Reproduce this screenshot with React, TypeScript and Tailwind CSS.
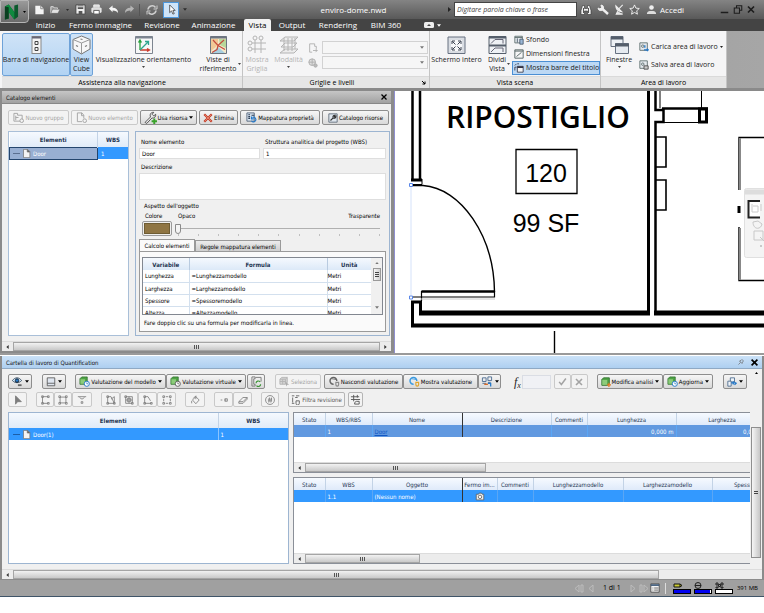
import type { ReactNode } from 'react';
import { clsx } from 'clsx';

const RIBBON_TABS_LEFT = [
  { label: 'Inizio', width: 'w-[33px]' },
  { label: 'Fermo immagine', width: 'w-[77px]' },
  { label: 'Revisione', width: 'w-[46px]' },
  { label: 'Animazione', width: 'w-[57px]' },
];

const RIBBON_TABS_RIGHT = [
  { label: 'Output', width: 'w-[42px]' },
  { label: 'Rendering', width: 'w-[50px]' },
  { label: 'BIM 360', width: 'w-[46px]' },
];

const FORMULAS = [
  { name: 'Lunghezza', formula: '=Lunghezzamodello', unit: 'Metri' },
  { name: 'Larghezza', formula: '=Larghezzamodello', unit: 'Metri' },
  { name: 'Spessore', formula: '=Spessoremodello', unit: 'Metri' },
  { name: 'Altezza', formula: '=Altezzamodello', unit: 'Metri' },
];

/* ---------- icons ---------- */

interface IconProps {
  className?: string;
  children: ReactNode;
  box?: string;
}

function Icon({ className = 'size-[11px]', box = '0 0 12 12', children }: IconProps) {
  return (
    <svg viewBox={box} className={clsx('shrink-0', className)} fill="none" stroke="currentColor" aria-hidden="true">
      {children}
    </svg>
  );
}

interface CaretProps {
  className?: string;
  size?: string;
}

function Caret({ className, size = 'w-[4px] h-[3px]' }: CaretProps) {
  return (
    <svg viewBox="0 0 5 3" className={clsx('shrink-0', size, className)} fill="currentColor" aria-hidden="true">
      <path d="M0 0h5L2.5 3z" />
    </svg>
  );
}

const PageIcon = ({ className }: { className?: string }) => (
  <Icon className={className}>
    <path d="M2 .5h5.500l3 3v8H2z" fill="#f4f4f4" stroke="#777" />
    <path d="M7 .5v3.500h3.500z" fill="#555" stroke="#777" />
  </Icon>
);

const NewGroupIcon = () => (
  <Icon>
    <path d="M1 1.500h4v2h5V10H1z" />
    <path d="M3 4v5M3 6h3" />
    <circle cx="9.500" cy="9.500" r="2" fill="#f3f3f3" />
  </Icon>
);

const NewItemIcon = () => (
  <Icon>
    <path d="M8.500 7V3.500L6.500 1h-5v9.500h5" />
    <path d="M6 1v3h2.500" />
    <circle cx="9.500" cy="9.500" r="2" fill="#f3f3f3" />
  </Icon>
);

const WrenchPlusIcon = () => (
  <Icon className="size-[13px]">
    <path d="M1 10.500l5-5C5 3 6.500 1 9 1.200L7.500 3l1.500 1.500 1.800-1.500c.4 2-1.300 4-3.500 3.500L2.500 11.500z" fill="#e9e9e9" stroke="#444" strokeWidth=".8" />
    <path d="M9.500 7v5M7 9.500h5" stroke="#3aa32b" strokeWidth="1.800" />
  </Icon>
);

const DeleteIcon = () => (
  <Icon className="size-[10px]">
    <path d="M1.500 1.500l9 9M10.500 1.500l-9 9" stroke="#c23b25" strokeWidth="2.600" />
    <path d="M2 2l8 8M10 2l-8 8" stroke="#ee8d77" strokeWidth="1" />
  </Icon>
);

const MapIcon = () => (
  <Icon>
    <path d="M1 1h8v9H1z" fill="#dbe6f2" stroke="#56677c" />
    <path d="M2.500 3h2M2.500 5h2M2.500 7h2M6 3.500h3" stroke="#2b3d54" strokeWidth="1.200" />
    <path d="M6 9.500a2.500 2.500 0 1 0 1-3.500M6 5v2.500h2.500" stroke="#2478c8" strokeWidth="1.200" />
  </Icon>
);

const CatalogIcon = () => (
  <Icon className="size-[10px]">
    <path d="M1 1h10v10H1z" fill="#dfe6ee" stroke="#5a6675" />
    <path d="M3 9l3.500-3.500M6 5.500c-.4-2 1-3 2.500-2.800L7.500 4l1 1L9.600 4c0 2-1.600 2.500-3.100 2" stroke="#333" strokeWidth="1.300" />
  </Icon>
);

const TakeoffIcon = ({ accent }: { accent: string }) => (
  <Icon>
    <path d="M1 3l2-2h6v6l-2 2H1z" fill="#4ea345" stroke="#2d6e2a" strokeWidth=".8" />
    <path d="M1.500 3.500h5v5h-5z" fill="#8ccb7a" stroke="none" />
    <circle cx="8.500" cy="8.500" r="2.800" fill="#fff" stroke={accent} />
    <path d="M8.500 7v1.500h1.500" stroke={accent} strokeWidth=".8" />
  </Icon>
);

const OrbitIcon = ({ ring, dot }: { ring: string; dot: string }) => (
  <Icon>
    <path d="M8.500 5.500A3.700 3.700 0 1 0 5 9" stroke={ring} strokeWidth="1.600" />
    <path d="M3 3l5 1" stroke={ring} strokeWidth=".8" />
    <path d="M7.500 7h3v2.500a1.500 1.500 0 0 1-3 0z" stroke={dot} strokeWidth="1.200" />
  </Icon>
);

const CubeIcon = () => (
  <Icon>
    <path d="M1 3.500l2-2h6v5.500l-2 2H1z" fill="#d4d4d4" stroke="#b3b3b3" />
    <path d="M1 3.500h6V9M7 3.500l2-2M4 3.500V9M1 6h6" stroke="#b3b3b3" />
    <path d="M7 6l4 3.500H9L8 11.500z" fill="#aaa" stroke="none" />
  </Icon>
);

const PagesRefreshIcon = () => (
  <Icon>
    <path d="M1 1h3.500v2H3v6h1.500v2H1zM5 1.500h6V6" stroke="#777" />
    <path d="M5.500 8a2.500 2.500 0 0 1 4.500-1.500M10.500 9a2.500 2.500 0 0 1-4.500 1.500" stroke="#3b9434" strokeWidth="1.300" />
  </Icon>
);

const GridLinkIcon = () => (
  <Icon className="w-[12px] h-[11px]">
    <path d="M1 2h4v4H1zM7 1h4v4H7zM1 8h4M7 7h3" stroke="#4d6c92" />
    <path d="M3 9h4" stroke="#d5621b" strokeWidth="1.500" />
    <path d="M7 8h3v3.500" stroke="#2478c8" strokeWidth="1.400" />
  </Icon>
);

const ExportIcon = () => (
  <Icon className="size-[10px]">
    <path d="M4 1h5v5H4z" fill="#eef3f8" stroke="#47678a" />
    <path d="M1 5h4v6H1z" fill="#eef3f8" stroke="#47678a" />
    <path d="M5 7h4M7.500 5v4M9 6.500l2 1-2 2" stroke="#2478c8" strokeWidth="1.500" />
  </Icon>
);

/* ---------- shared controls ---------- */

interface ToolButtonProps {
  children?: ReactNode;
  icon?: ReactNode;
  width: string;
  label?: string;
  caret?: boolean;
  disabled?: boolean;
}

function ToolButton({ children, icon, width, label, caret, disabled }: ToolButtonProps) {
  return (
    <button
      type="button"
      aria-label={label}
      disabled={disabled}
      className={clsx(
        'h-[15px] shrink-0 flex items-center justify-center gap-px border rounded-xs whitespace-nowrap',
        width,
        disabled ? 'border-[#c9c9c9] bg-[#f3f3f3] text-[#a3a3a3]' : 'border-[#8e8e8e] bg-linear-to-b from-[#f6f6f6] to-[#d9d9d9] text-black',
      )}
    >
      {icon}
      {children}
      {caret && <Caret className="ml-px" />}
    </button>
  );
}

interface HScrollProps {
  thumb: string;
  end?: boolean;
}

function HScroll({ thumb, end }: HScrollProps) {
  return (
    <div className="h-[10px] flex items-stretch bg-[#ececec] border-t border-[#dcdcdc]">
      <span className="w-[11px] flex items-center justify-center">
        <svg viewBox="0 0 3 5" className="w-[3px] h-[4px] fill-[#333]" aria-hidden="true"><path d="M3 0v5L0 2.500z" /></svg>
      </span>
      <span className={clsx('flex items-center justify-center gap-px border border-[#a5a5a5] bg-linear-to-b from-[#f2f2f2] to-[#c9c9c9]', thumb)}>
        <i className="w-px h-[4px] bg-[#555]" />
        <i className="w-px h-[4px] bg-[#555]" />
        <i className="w-px h-[4px] bg-[#555]" />
      </span>
      {end && (
        <span className="w-[11px] flex items-center justify-center">
          <svg viewBox="0 0 3 5" className="w-[3px] h-[4px] fill-[#333]" aria-hidden="true"><path d="M0 0v5l3-2.500z" /></svg>
        </span>
      )}
    </div>
  );
}

/* ---------- title bar ---------- */

function TitleBar() {
  return (
    <header className="h-[19px] flex items-center bg-linear-to-b from-[#848484] to-[#595959] text-white">
      <div className="w-[129px] ml-[5px] flex items-center">
        <button type="button" aria-label="Nuovo" className="w-[15px]">
          <Icon className="w-[11px] h-[10px]"><path d="M1 1h6.500L11 4.500V11H1z" fill="#f4f4f4" stroke="none" /><path d="M7.500 1v3.500H11" stroke="#777" /></Icon>
        </button>
        <button type="button" aria-label="Apri" className="w-[17px]">
          <Icon className="w-[12px] h-[10px]"><path d="M1 10V2h3l1 1.500h4V5" fill="#999" stroke="#e8e8e8" /><path d="M1 10l2-5h9l-2.500 5z" fill="#e2e2e2" stroke="#555" strokeWidth=".6" /></Icon>
        </button>
        <Caret className="text-[#2d2d2d] mr-[6px]" size="w-[3px] h-[2px]" />
        <button type="button" aria-label="Salva" className="w-[16px]">
          <Icon><path d="M1 1h10v10H1z" fill="#eee" stroke="#444" /><path d="M3 1.500h6v4H3zM4 7.500h4v3.500H4z" fill="#555" stroke="none" /><path d="M3 3h6" stroke="#eee" /></Icon>
        </button>
        <button type="button" aria-label="Stampa" className="w-[17px]">
          <Icon><path d="M3 4V1h6v3M1 4.500h10V9H1z" fill="#ddd" stroke="#f2f2f2" /><path d="M3 7h6v4H3z" fill="#fff" stroke="#555" /></Icon>
        </button>
        <button type="button" aria-label="Annulla" className="w-[16px]">
          <Icon><path d="M1 5l4-3.500V4c4 0 6 2 6 6-1-2-3-3-6-3v2z" fill="#f4f4f4" stroke="none" /></Icon>
        </button>
        <button type="button" aria-label="Ripristina" className="w-[15px] text-[#b5b5b5]">
          <Icon><path d="M11 5L7 1.500V4C3 4 1 6 1 10c1-2 3-3 6-3v2z" fill="currentColor" stroke="none" /></Icon>
        </button>
        <span className="w-px h-[12px] bg-[#555] mr-[6px]" />
        <button type="button" aria-label="Aggiorna" className="w-[16px] text-[#cfcfcf]">
          <Icon className="size-[12px]"><path d="M2 5.500A4.200 4.200 0 0 1 9.500 3.500M10 6.500A4.200 4.200 0 0 1 2.500 8.500" strokeWidth="1.600" /><path d="M11 1.500V5H7.500M1 10.500V7h3.500" strokeWidth="1" /></Icon>
        </button>
      </div>
      <button type="button" aria-label="Seleziona" className="w-[16px] h-[16px] flex items-center justify-center border border-[#4d97db] bg-[#cfe4f8]">
        <Icon><path d="M4 1v8.500l2-2L7.500 11 9 10.500 7.500 7H10z" fill="#fff" stroke="#333" strokeWidth=".8" /></Icon>
      </button>
      <Caret className="ml-[4px] text-[#2d2d2d]" />
      <h1 className="flex-1 text-center text-[8px] leading-[10px] pl-[82px] pr-[10px]">enviro-dome.nwd</h1>
      <svg viewBox="0 0 3 5" className="w-[3px] h-[5px] mr-[3px] fill-[#222]" aria-hidden="true"><path d="M0 0v5l3-2.500z" /></svg>
      <input
        type="search"
        aria-label="Cerca"
        placeholder="Digitare parola chiave o frase"
        className="w-[123px] h-[15px] px-[2px] bg-white border border-[#444] text-[7px] leading-[10px] italic text-black placeholder:text-[#444]"
      />
      <nav className="w-[187px] flex items-center">
        <button type="button" aria-label="Trova" className="ml-[3px] w-[17px]">
          <Icon className="size-[12px]"><path d="M2.500 1.500h2v3h3v-3h2l1.500 5v4H7.500V7h-3v3.500H1v-4z" fill="#efefef" stroke="#333" strokeWidth=".6" /><path d="M3.500 4v5M8.500 4v5" stroke="#555" /></Icon>
        </button>
        <button type="button" aria-label="Chiave" className="w-[17px]">
          <Icon className="size-[12px]"><path d="M5.500 5l5.500 5" stroke="#eee" strokeWidth="2.400" /><path d="M4 1a2.800 2.800 0 1 1-3 3l2 1 1.500-1.500z" fill="#eee" stroke="#eee" /></Icon>
        </button>
        <button type="button" aria-label="Comunicazioni" className="w-[15px]">
          <Icon><path d="M2 2c0 4 2 6 6.500 6.500zM5 5.500L9.500 1M4 8l-1.500 3h7" fill="#ddd" stroke="#eee" strokeWidth="1.200" /></Icon>
        </button>
        <button type="button" aria-label="Preferiti" className="w-[17px]">
          <Icon><path d="M6 1l1.500 3.500 3.700.4-2.800 2.500.8 3.700L6 9.200l-3.200 1.900.8-3.700L.8 4.900l3.700-.4z" fill="#666" stroke="#f5f5f5" /></Icon>
        </button>
        <button type="button" className="flex items-center gap-[3px] text-[8px] leading-[10px]">
          <Icon><circle cx="6" cy="3.800" r="2.500" fill="#eee" stroke="none" /><path d="M1 11c0-3 2-3.500 5-3.500s5 .5 5 3.500z" fill="#ddd" stroke="none" /></Icon>
          Accedi
        </button>
        <div className="ml-auto mr-[9px] flex items-center gap-[4px] text-[#1d1d1d]">
          <button type="button" aria-label="Riduci"><Icon className="w-[9px] h-[9px]"><path d="M1 10h10" strokeWidth="2" /></Icon></button>
          <button type="button" aria-label="Ripristina finestra"><Icon className="w-[10px] h-[9px]"><path d="M4 4V1h7v6H8M1 4h7v7H1z" strokeWidth="1.400" /></Icon></button>
          <button type="button" aria-label="Chiudi"><Icon className="w-[8px] h-[9px]"><path d="M1.500 1.500l9 9M10.500 1.500l-9 9" strokeWidth="2.600" /></Icon></button>
        </div>
      </nav>
    </header>
  );
}

function RibbonTabs() {
  return (
    <nav className="h-[12px] flex items-stretch bg-[#444] text-white text-[8px] leading-[12px] whitespace-nowrap">
      {RIBBON_TABS_LEFT.map(t => (
        <button key={t.label} type="button" className={clsx('flex justify-center', t.width)}>{t.label}</button>
      ))}
      <button type="button" className="w-[27px] ml-[2px] bg-[#f2f2f2] text-black flex justify-center rounded-t-xs">Vista</button>
      {RIBBON_TABS_RIGHT.map(t => (
        <button key={t.label} type="button" className={clsx('flex justify-center', t.width)}>{t.label}</button>
      ))}
      <button type="button" aria-label="Riduci barra multifunzione" className="ml-[15px] flex items-center gap-[3px]">
        <Icon className="w-[10px] h-[6px]" box="0 0 10 6"><rect width="10" height="6" rx="1.500" fill="#eee" stroke="none" /><path d="M3 4l2-2 2 2z" fill="#444" stroke="none" /></Icon>
        <Caret />
      </button>
    </nav>
  );
}

/* ---------- ribbon ---------- */

interface RibbonGroupProps {
  title: string;
  width: string;
  children: ReactNode;
  launcher?: boolean;
}

function RibbonGroup({ title, width, children, launcher }: RibbonGroupProps) {
  return (
    <section className={clsx('shrink-0 flex flex-col border-r border-[#c4c4c4]', width)}>
      <div className="flex-1 flex items-start pt-[2px]">{children}</div>
      <h2 className="h-[12px] flex items-center bg-[#e6e6e6] border-t border-[#dadada] leading-[10px]">
        <span className="flex-1 text-center">{title}</span>
        {launcher && (
          <Icon className="size-[5px] mr-[3px]" box="0 0 5 5"><path d="M1 1l3 3M4 1.500V4H1.500" /></Icon>
        )}
      </h2>
    </section>
  );
}

interface BigButtonProps {
  icon: ReactNode;
  lines: string[];
  width: string;
  active?: boolean;
  disabled?: boolean;
  caret?: boolean;
  sideCaret?: boolean;
}

function BigButton({ icon, lines, width, active, disabled, caret, sideCaret }: BigButtonProps) {
  return (
    <button
      type="button"
      disabled={disabled}
      className={clsx(
        'h-[43px] shrink-0 flex flex-col items-center pt-px border rounded-xs leading-[9px] whitespace-nowrap',
        width,
        active ? 'border-[#6ea2d8] bg-linear-to-b from-[#cfe3f7] to-[#b2d3f3]' : 'border-transparent',
        disabled ? 'text-[#b4b4b4]' : 'text-[#222]',
      )}
    >
      {icon}
      {lines.map(line => <span key={line}>{line}</span>)}
      {caret && <Caret size="w-[3px] h-[2px]" className="mt-[2px] text-[#444]" />}
      {sideCaret && <Caret size="w-[3px] h-[2px]" className="-mt-[10px] self-end text-[#444]" />}
    </button>
  );
}

function LevelSelect({ label }: { label: string }) {
  return (
    <div className="relative flex items-center">
      <select aria-label={label} disabled className="w-[106px] h-[13px] appearance-none bg-[#f6f6f6] border border-[#d2d2d2]" />
      <Caret className="absolute right-[4px] text-[#777]" />
    </div>
  );
}

function Ribbon() {
  return (
    <div className="flex items-stretch bg-linear-to-r from-[#8c8c8c] to-[#a6a6a6] border-b-[3px] border-[#8a8a8a] text-[7px]">
      <div className="h-[57px] flex bg-[#f5f5f6] pl-[2px]">
        <RibbonGroup title="Assistenza alla navigazione" width="w-[241px]">
          <BigButton
            width="w-[68px]"
            active
            lines={['Barra di navigazione']}
            icon={<Icon className="w-[11px] h-[20px]" box="0 0 11 20"><rect x="1" y="1.500" width="9" height="17" fill="#f4f4f4" stroke="#888" /><path d="M1 2.500h9" stroke="#667" strokeWidth="2" /><path d="M4 6.500h3v3H4zM4 12.500h3v3H4z" stroke="#444" /></Icon>}
          />
          <BigButton
            width="w-[23px]"
            active
            lines={['View', 'Cube']}
            icon={<Icon className="w-[19px] h-[20px]" box="0 0 19 20"><path d="M9.500 1L18 4.500V14l-8.500 5L1 14V4.500z" fill="#f7f7f7" stroke="#777" /><path d="M1 4.500L9.500 8 18 4.500M9.500 8v11" stroke="#999" /><path d="M4 10.500l2 1M13 11.500l2-1M8.500 4l2 .5" stroke="#777" strokeWidth="1.200" /></Icon>}
          />
          <BigButton
            width="w-[101px]"
            caret
            lines={['Visualizzazione orientamento']}
            icon={<Icon className="w-[20px] h-[20px]" box="0 0 20 20"><path d="M1.500 1.500h17v17h-17z" fill="#f7f7f7" stroke="#7d8590" /><path d="M1.500 2.500h17" stroke="#7d8590" strokeWidth="2" /><path d="M6 15V6M4.500 7.500L6 5l1.500 2.500" stroke="#28a03c" strokeWidth="1.300" /><path d="M6 15h9M13 13.500l2.500 1.500-2.500 1.500" stroke="#cc3b2d" strokeWidth="1.300" /><path d="M6 15l8-8M11 6.500h3.500V10" stroke="#2fa58e" strokeWidth="1.300" /></Icon>}
          />
          <BigButton
            width="w-[48px]"
            sideCaret
            lines={['Viste di', 'riferimento']}
            icon={<Icon className="w-[19px] h-[20px]" box="0 0 19 20"><path d="M1.500 1.500h16v17h-16z" fill="#f3e8c9" stroke="#6d7580" /><path d="M2 4h7v6l-7 6z" fill="#f2c896" stroke="none" /><path d="M10 4h7v9l-6-3z" fill="#b8d79a" stroke="none" /><path d="M3 18l6-6 7 6z" fill="#a7cfe0" stroke="none" /><path d="M1.500 2.500h16" stroke="#6d7580" strokeWidth="2" /><path d="M4 5l5 5.500L15 5M9 10.500l-1 4-5 3M9 10.500l7 4" stroke="#c44b3c" strokeWidth="1.200" /></Icon>}
          />
        </RibbonGroup>

        <RibbonGroup title="Griglie e livelli" width="w-[187px]" launcher>
          <BigButton
            width="w-[28px]"
            disabled
            lines={['Mostra', 'Griglia']}
            icon={<Icon className="w-[20px] h-[20px]" box="0 0 20 20"><path d="M8 5v13M14 5v13M5 8h14M5 14h14" /><circle cx="8" cy="3" r="2" /><circle cx="14" cy="3" r="2" /><circle cx="3" cy="8" r="2" /><circle cx="3" cy="14" r="2" /></Icon>}
          />
          <BigButton
            width="w-[35px]"
            disabled
            caret
            lines={['Modalità']}
            icon={<Icon className="w-[20px] h-[20px]" box="0 0 20 20"><path d="M6 2h13l-4 4H1zM6 14h13l-4 4H1z" fill="#ececec" /><path d="M5 3v13M9 3v13M13 3v13M16 3v11M6 8h12l-4 4H2z" /></Icon>}
          />
          <div className="ml-auto mr-px pt-[8px] flex flex-col gap-[2px] text-[#aaa]">
            <div className="flex items-center gap-[4px]">
              <Icon className="size-[10px]"><path d="M8 1H2v10h3M8 1v3h2v3" /><path d="M6 9h5M9 7l2 2-2 2" /></Icon>
              <LevelSelect label="Griglia attiva" />
            </div>
            <div className="flex items-center gap-[4px]">
              <Icon className="size-[10px]"><circle cx="5" cy="5" r="4" fill="#ddd" /><path d="M1 5h8M5 1v8" /><circle cx="9" cy="9" r="2" fill="#bbb" /></Icon>
              <LevelSelect label="Livello attivo" />
            </div>
          </div>
        </RibbonGroup>

        <RibbonGroup title="Vista scena" width="w-[171px]">
          <BigButton
            width="w-[53px]"
            lines={['Schermo intero']}
            icon={<Icon className="w-[19px] h-[20px]" box="0 0 19 20"><path d="M1 2h17v16.500H1z" fill="#d9dde3" stroke="#667080" /><path d="M4 5h11v11H4z" fill="#f7f8fa" stroke="none" /><path d="M5 9V6h3M11 6h3v3M14 12v3h-3M8 15H5v-3M5.500 6.500l3 3M13.500 6.500l-3 3M5.500 14.500l3-3M13.500 14.500l-3-3" stroke="#3a4250" /></Icon>}
          />
          <BigButton
            width="w-[28px]"
            sideCaret
            lines={['Dividi', 'Vista']}
            icon={<Icon className="w-[19px] h-[20px]" box="0 0 19 20"><path d="M1 1.500h17v17H1z" fill="#eef1f5" stroke="#555e6b" /><path d="M1 2.500h17M1 10.500h17" stroke="#555e6b" strokeWidth="2" /><path d="M3 8.500l4-4h8M3 17l4-4h8M15 4.500v4M15 13v4" stroke="#667" /></Icon>}
          />
          <div className="ml-auto flex flex-col leading-[10px] whitespace-nowrap text-[#222]">
            <button type="button" className="h-[14px] pl-[2px] flex items-center gap-[2px]">
              <Icon className="size-[10px]"><path d="M1 1.500h9v8H1zM1 3h9" fill="#e5e9ee" stroke="#566" /><path d="M4 4v5M7 5h4v6H7z" fill="#9bb8d8" stroke="#456" /></Icon>
              Sfondo
            </button>
            <button type="button" className="h-[14px] pl-[2px] flex items-center gap-[2px]">
              <Icon className="size-[10px]"><path d="M1 1h10v10H1zM1 2.500h10" fill="#f5f5f5" stroke="#455" /><path d="M3 9l6-5" stroke="#455" /></Icon>
              Dimensioni finestra
            </button>
            <button type="button" className="w-[88px] h-[14px] pl-px flex items-center gap-[2px] border border-[#4b8fd4] bg-[#bcd8f4]">
              <Icon className="size-[10px]"><path d="M4 4h7v7H4z" fill="#f5f5f5" stroke="#334" /><path d="M4 5h7" stroke="#334" strokeWidth="2" /><path d="M1 9V5h2M1 3l2-2M4 1h2" stroke="#334" /></Icon>
              Mostra barre del titolo
            </button>
          </div>
        </RibbonGroup>

        <RibbonGroup title="Area di lavoro" width="w-[126px]">
          <BigButton
            width="w-[36px]"
            caret
            lines={['Finestre']}
            icon={<Icon className="w-[20px] h-[20px]" box="0 0 20 20"><path d="M2 1.500h12v10H2z" fill="#eef1f5" stroke="#667080" /><path d="M2 3h12" stroke="#555e6b" strokeWidth="3" /><path d="M6.500 8.500h13v10h-13z" fill="#e6eaf0" stroke="#667080" /><path d="M6 10h14" stroke="#555e6b" strokeWidth="3" /></Icon>}
          />
          <div className="pt-[9px] ml-[2px] flex flex-col gap-[8px] leading-[10px] whitespace-nowrap text-[#222]">
            <button type="button" className="flex items-center gap-[2px]">
              <Icon className="size-[10px]"><path d="M1 1h9v9H1z" fill="#e5e9ee" stroke="#566" /><circle cx="4.500" cy="5" r="1.500" stroke="#566" /><path d="M7 4v3M6 9.500h5M9.500 8l1.500 1.500L9.500 11" stroke="#2478c8" strokeWidth="1.500" /></Icon>
              Carica area di lavoro
              <Caret size="w-[3px] h-[2px]" />
            </button>
            <button type="button" className="flex items-center gap-[2px]">
              <Icon className="size-[10px]"><path d="M1 1h9v9H1z" fill="#e5e9ee" stroke="#566" /><circle cx="4.500" cy="5" r="1.500" stroke="#566" /><path d="M6 7h5v4H6z" fill="#ccc" stroke="#444" /></Icon>
              Salva area di lavoro
            </button>
          </div>
        </RibbonGroup>
      </div>
    </div>
  );
}

/* ---------- catalog panel ---------- */

function CatalogTree() {
  return (
    <div className="w-[121px] shrink-0 border border-[#a9bfd8] bg-white">
      <table className="w-full table-fixed border-collapse">
        <colgroup><col className="w-[88px]" /><col /></colgroup>
        <thead>
          <tr className="h-[15px] bg-linear-to-b from-[#f5f9fe] to-[#e0ebf8] text-[#1f3552]">
            <th className="p-0 font-semibold border-r border-[#c3d3e6]">Elementi</th>
            <th className="p-0 font-semibold">WBS</th>
          </tr>
        </thead>
        <tbody>
          <tr className="h-[12px] text-white">
            <td className="p-0 bg-[#98afd2] border border-[#24456d]">
              <span className="flex items-center gap-[2px] pl-[3px]">
                <i className="w-[7px] h-px bg-[#5b6f8f]" />
                <PageIcon className="size-[9px]" />
                Door
              </span>
            </td>
            <td className="p-0 pl-[3px] bg-[#3399ff]">1</td>
          </tr>
        </tbody>
      </table>
    </div>
  );
}

function FormulaTable() {
  return (
    <div className="h-[58px] flex border border-[#828790] bg-white overflow-hidden">
      <div className="flex-1 overflow-hidden">
        <table className="w-full table-fixed border-collapse">
          <colgroup><col className="w-[46px]" /><col className="w-[138px]" /><col /></colgroup>
          <thead>
            <tr className="h-[12px] bg-linear-to-b from-[#f5f9fe] to-[#dce9f8] text-[#1f3552]">
              <th className="p-0 font-semibold border-r border-[#b9cbe0]">Variabile</th>
              <th className="p-0 font-semibold border-r border-[#b9cbe0]">Formula</th>
              <th className="p-0 font-semibold">Unità</th>
            </tr>
          </thead>
          <tbody>
            {FORMULAS.map(f => (
              <tr key={f.name} className="h-[12px] border-b border-[#d3e0ee]">
                <td className="p-0 pl-[2px] border-r border-[#d3e0ee]">{f.name}</td>
                <td className="p-0 pl-[2px] border-r border-[#d3e0ee]">{f.formula}</td>
                <td className="p-0">{f.unit}</td>
              </tr>
            ))}
          </tbody>
        </table>
      </div>
      <div className="w-[11px] flex flex-col items-center bg-[#f0f0f0]">
        <Caret size="w-[4px] h-[2px]" className="my-[4px] rotate-180 text-[#777]" />
        <span className="w-[8px] h-[13px] flex flex-col items-center justify-center gap-px border border-[#9a9a9a] bg-linear-to-r from-[#f5f5f5] to-[#d2d2d2]">
          <i className="w-[4px] h-px bg-[#444]" />
          <i className="w-[4px] h-px bg-[#444]" />
          <i className="w-[4px] h-px bg-[#444]" />
        </span>
        <Caret className="mt-auto mb-[5px] text-[#777]" />
      </div>
    </div>
  );
}

function ElementForm() {
  return (
    <form className="flex-1 min-w-0 border border-[#9db5d1] bg-[#f0f0f0] pt-[4px] px-[3px] pb-[3px]">
      <div className="flex gap-[3px]">
        <label className="w-[121px] leading-[12px]">
          <span className="block pl-[2px]">Nome elemento</span>
          <input type="text" defaultValue="Door" className="block w-full h-[11px] px-[2px] bg-white border border-[#dedede] leading-[9px]" />
        </label>
        <label className="flex-1 leading-[12px] whitespace-nowrap">
          <span className="block pl-[2px]">Struttura analitica del progetto (WBS)</span>
          <input type="text" defaultValue="1" className="block w-full h-[11px] px-[2px] bg-white border border-[#dedede] leading-[9px]" />
        </label>
      </div>
      <label className="block leading-[12px] pt-[2px]">
        <span className="block pl-[2px]">Descrizione</span>
        <textarea className="block w-full h-[27px] bg-white border border-[#dedede] resize-none" />
      </label>

      <fieldset className="mt-px pb-[3px]">
        <legend className="pl-[5px] leading-[9px]">Aspetto dell'oggetto</legend>
        <div className="pl-[6px] pr-[6px] flex leading-[11px]">
          <label htmlFor="colore" className="w-[33px]">Colore</label>
          <span className="flex-1">Opaco</span>
          <span>Trasparente</span>
        </div>
        <div className="pl-[3px] pr-[6px] flex items-start gap-[3px]">
          <button id="colore" type="button" className="w-[30px] h-[15px] p-px border border-[#9a9a9a] bg-[#eee] rounded-xs">
            <span className="block w-full h-full border border-[#6e5c33] bg-[#8f7543]" />
          </button>
          <div className="flex-1 grid pt-[2px]">
            <input
              type="range"
              aria-label="Trasparenza"
              defaultValue="0"
              className="col-start-1 row-start-1 w-full h-[11px] appearance-none bg-transparent [&::-webkit-slider-runnable-track]:h-px [&::-webkit-slider-runnable-track]:bg-[#b0b0b0] [&::-webkit-slider-thumb]:appearance-none [&::-webkit-slider-thumb]:-mt-[4px] [&::-webkit-slider-thumb]:w-[6px] [&::-webkit-slider-thumb]:h-[10px] [&::-webkit-slider-thumb]:bg-[#f4f4f4] [&::-webkit-slider-thumb]:border [&::-webkit-slider-thumb]:border-[#8a8a8a] [&::-webkit-slider-thumb]:rounded-b-full"
            />
            <div className="h-[2px] pl-[3px] flex justify-between">
              {Array.from({ length: 11 }, (_, i) => <i key={i} className="w-px h-[2px] bg-[#c0c0c0]" />)}
            </div>
          </div>
        </div>
      </fieldset>

      <div role="tablist" className="flex items-end leading-[9px] whitespace-nowrap">
        <button type="button" role="tab" aria-selected="true" className="w-[56px] h-[12px] bg-[#fafafa] border border-b-0 border-[#9a9a9a]">Calcolo elementi</button>
        <button type="button" role="tab" aria-selected="false" className="w-[86px] h-[11px] bg-linear-to-b from-[#ececec] to-[#cfcfcf] border border-b-0 border-[#9a9a9a]">Regole mappatura elementi</button>
      </div>
      <div className="border border-[#9a9a9a] bg-[#fafafa] pt-[5px] px-[2px]">
        <FormulaTable />
        <p className="pl-[2px] py-[2px] leading-[12px]">Fare doppio clic su una formula per modificarla in linea.</p>
      </div>
    </form>
  );
}

function CatalogPanel() {
  return (
    <section className="w-[394px] shrink-0 flex flex-col border-l-2 border-r-[3px] border-b-2 border-[#8b8b8b] bg-[#f0f0f0]">
      <header className="h-[13px] flex items-center justify-between px-[4px] bg-linear-to-b from-[#c6c6c6] to-[#a2a2a2] border-b border-[#888]">
        <h2 className="text-[#111]">Catalogo elementi</h2>
        <button type="button" aria-label="Chiudi catalogo"><Icon className="size-[6px]"><path d="M1 1l10 10M11 1L1 11" stroke="#000" strokeWidth="2.600" /></Icon></button>
      </header>
      <div className="flex gap-[2px] pl-[6px] pt-[6px] pb-[6px]">
        <ToolButton width="w-[61px]" disabled icon={<NewGroupIcon />}>Nuovo gruppo</ToolButton>
        <ToolButton width="w-[67px]" disabled icon={<NewItemIcon />}>Nuovo elemento</ToolButton>
        <ToolButton width="w-[57px]" caret icon={<WrenchPlusIcon />}>Usa risorsa</ToolButton>
        <ToolButton width="w-[39px]" icon={<DeleteIcon />}>Elimina</ToolButton>
        <ToolButton width="w-[80px]" icon={<MapIcon />}>Mappatura proprietà</ToolButton>
        <ToolButton width="w-[67px]" icon={<CatalogIcon />}>Catalogo risorse</ToolButton>
      </div>
      <div className="flex gap-[6px] pl-[6px] pr-px pb-[5px]">
        <CatalogTree />
        <ElementForm />
      </div>
      <HScroll thumb="flex-1" end />
    </section>
  );
}

/* ---------- drawing ---------- */

function FloorPlan() {
  return (
    <main className="flex-1 min-w-0 bg-white border-l border-[#8f8fd0] overflow-hidden">
      <svg viewBox="0 0 370 262" preserveAspectRatio="xMinYMin slice" className="block w-full h-0 min-h-full" fill="none" stroke="#000">
        <path d="M17.500 0v88M25 0v88" strokeWidth="2.500" />
        <path d="M16 89h11" strokeWidth="3" />
        <path d="M16 93.500h11V88" />
        <path d="M16 94.500h12C66 97 99 145 99.500 201" strokeWidth="1.400" />
        <path d="M26.500 200.500h73" strokeWidth="2.500" />
        <path d="M16 206h83.500v-6M26.500 200v10" strokeWidth="1.200" />
        <path d="M26 208h74" stroke="#ccc" />
        <path d="M17.500 235v-24h8v12" strokeWidth="3" />
        <path d="M24 222h231" strokeWidth="5" />
        <path d="M16 234.500h354" strokeWidth="4" />
        <path d="M253.500 0v224" strokeWidth="3" />
        <path d="M260.500 0v19h8v12h-8v193" strokeWidth="2.500" />
        <path d="M259 222h111" strokeWidth="5" />
        <path d="M265 0v17M306.500 0v17" />
        <path d="M267 17.500h46" strokeWidth="2.500" />
        <path d="M268 31.500h44" />
        <path d="M304.500 18h7v13h-7z" strokeWidth="3" />
        <path d="M261 46h10v30h-10M261 89h10v30h-10" strokeWidth="1.600" />
        <path d="M344 99V46.500h26M344 136v53.500h26" strokeWidth="1.400" />
        <path d="M345 47v52M345 137v52" stroke="#888" strokeWidth="2" />
        <path d="M344 115v7" strokeWidth="3" />
        <path d="M159.500 240v24" strokeWidth="1.400" />
        <path d="M121 58.500h61v44h-61z" strokeWidth="1.300" />
        <path d="M16 96v108" stroke="#d5e2fa" />
        <path d="M14.500 92.500h3v3h-3zM14.500 205h3v3h-3z" fill="#fff" stroke="#5a87e8" />
        <rect x="349.500" y="97.500" width="24" height="69" rx="2" fill="#f4f4f4" stroke="#e0e0e0" />
        <path d="M350 101h20" stroke="#ddd" strokeWidth="5" />
        <path d="M370 110h-11.500v16.500H370" transform="translate(-5)" stroke="#222" strokeWidth="2" fill="#fff" />
        <path d="M357 113v8h6v-6h-5M366 113v7" stroke="#ccc" />
        <path d="M358 131c0 8 8 8 9 2l-4-3zM359 140h9v9h-9zM365 146l4 4" stroke="#c8c8c8" />
        <circle cx="366" cy="155" r="1" fill="#bbb" stroke="none" />
        <text x="51" y="37" className="font-['Open_Sans',sans-serif] text-[30px] font-semibold" fill="#000" stroke="none">RIPOSTIGLIO</text>
        <text x="151" y="91" textAnchor="middle" className="font-['Liberation_Sans',sans-serif] text-[25px]" fill="#000" stroke="none">120</text>
        <text x="151" y="141" textAnchor="middle" className="font-['Liberation_Sans',sans-serif] text-[25px]" fill="#000" stroke="none">99 SF</text>
      </svg>
    </main>
  );
}

/* ---------- quantification workbook ---------- */

const MARKUP_GROUPS = [
  [
    { name: 'Selezione', width: 'w-[19px]', path: 'M3 1v10l2.500-3H10z', fill: true },
  ],
  [
    { name: 'Polilinea', width: 'w-[18px]', path: 'M3 2h7M3 2v8h7M2 1h2v2H2zM9 1h2v2H9zM2 9h2v2H2zM9 9h2v2H9z' },
    { name: 'Rettangolo', width: 'w-[18px]', path: 'M2.500 2.500h7v7h-7zM1 1h2v2H1zM9 1h2v2H9zM1 9h2v2H1zM9 9h2v2H9z' },
    { name: 'Polilinea rapida', width: 'w-[20px]', path: 'M1 2h10M3 3l3 2 3-2M5 8h2v2H5z' },
  ],
  [
    { name: 'Area', width: 'w-[19px]', path: 'M2 2h4l4 8H2zM1 1h2v2H1zM9 9h2v2H9zM1 9h2v2H1zM6 5l4-3v8' },
    { name: 'Area rettangolare', width: 'w-[18px]', path: 'M2 2h8v8H2zM4 4h4v4H4zM2 6h8M6 2v8M1 1h2v2H1zM9 9h2v2H9z' },
    { name: 'Area rapida', width: 'w-[19px]', path: 'M2 2h4M2 2v8h8M6 2l3 5M1 9h2v2H1zM9 9h2v2H9zM1 1h2v2H1z' },
    { name: 'Riquadro rapido', width: 'w-[19px]', path: 'M1 1h2v2H1zM9 1h2v2H9zM1 9h2v2H1zM9 9h2v2H9zM4.500 2h3M4.500 10h3M2 4.500v3M10 4.500v3' },
  ],
  [
    { name: 'Riempimento', width: 'w-[20px]', path: 'M3 6l4-4 4 4-4 4.500zM7 5V1L4 4M2 7v3' },
  ],
  [
    { name: 'Aggiungi vertice', width: 'w-[19px]', path: 'M2 6h2M7 4.500h3v3H7zM8 5v2' },
    { name: 'Gomma', width: 'w-[19px]', path: 'M1 8l5-5h5L6 8zM1 8v2h5l5-5V3' },
  ],
  [
    { name: 'Conteggio', width: 'w-[18px]', path: 'M6 .7a5.300 5.300 0 1 0 .01 0M4.500 9l1-6M7 9l1-6M3.500 5h5M3.500 7h5' },
  ],
];

function MarkupToolbar() {
  return (
    <div className="flex gap-[9px] pl-[6px] pt-[3px]">
      {MARKUP_GROUPS.map((group, i) => (
        <div key={i} className="flex">
          {group.map(tool => (
            <ToolButton
              key={tool.name}
              label={tool.name}
              width={tool.width}
              disabled
              icon={<Icon className="size-[10px] text-[#7d7d7d]"><path d={tool.path} fill={tool.fill ? 'currentColor' : 'none'} /></Icon>}
            />
          ))}
        </div>
      ))}
      <div className="flex gap-[3px] text-[#555]">
        <button type="button" className="w-[57px] h-[15px] flex items-center justify-center gap-px border border-[#b5b5b5] bg-[#f3f3f3] rounded-xs whitespace-nowrap">
          <Icon className="size-[10px]"><path d="M1 1h3M6 1h4M2 3v6M5 3h3M1 10h3M6 7h4v3a1.500 1.500 0 0 1-4 0z" /></Icon>
          Filtra revisione
        </button>
        <button type="button" aria-label="Revisione" className="w-[15px] h-[15px] flex items-center justify-center border border-[#b5b5b5] bg-[#f3f3f3] rounded-xs">
          <Icon className="size-[11px]"><path d="M1 3h9M1 6h10M4 1v7M8 1v3M5 11c0-2 1-3 2-3h3v3z" /></Icon>
        </button>
      </div>
    </div>
  );
}

function WorkbookToolbar() {
  return (
    <div className="flex items-center pl-[6px] pt-[5px]">
      <ToolButton
        width="w-[24px]"
        label="Mostra riquadri"
        caret
        icon={<Icon className="w-[12px] h-[11px]"><path d="M1 5c3-4 7-4 10 0-3 3-7 3-10 0z" fill="#d8ecfb" stroke="#33475b" /><circle cx="6" cy="5" r="1.900" fill="#2478c8" stroke="#123" /><path d="M7 9h4v2H7z" fill="#666" stroke="none" /></Icon>}
      />
      <div className="w-[10px]" />
      <ToolButton
        width="w-[24px]"
        label="Visualizzazione"
        caret
        icon={<Icon className="size-[10px]"><path d="M1.500 1h9v9.500h-9z" fill="#dfe6f0" stroke="#555" /><path d="M1.500 7.500h9" stroke="#555" /></Icon>}
      />
      <div className="w-[9px]" />
      <ToolButton width="w-[91px]" caret icon={<TakeoffIcon accent="#2478c8" />}>Valutazione del modello</ToolButton>
      <ToolButton width="w-[80px]" caret icon={<TakeoffIcon accent="#5c5c5c" />}>Valutazione virtuale</ToolButton>
      <div className="w-px" />
      <ToolButton width="w-[18px]" label="Cambia modello" icon={<PagesRefreshIcon />} />
      <div className="w-[10px]" />
      <ToolButton width="w-[46px]" disabled icon={<CubeIcon />}>Seleziona</ToolButton>
      <div className="w-[3px]" />
      <ToolButton width="w-[79px]" icon={<OrbitIcon ring="#666" dot="#888" />}>Nascondi valutazione</ToolButton>
      <ToolButton width="w-[75px]" icon={<OrbitIcon ring="#3b9ae0" dot="#e0a52b" />}>Mostra valutazione</ToolButton>
      <ToolButton width="w-[23px]" label="Colonne" caret icon={<GridLinkIcon />} />
      <label className="ml-[13px] flex items-center gap-px">
        <span className="font-['Liberation_Serif',serif] italic text-[12px] leading-[12px] text-[#222]">f<sub className="text-[8px]">x</sub></span>
        <input type="text" aria-label="Formula" className="w-[29px] h-[14px] bg-[#f0f1f5] border border-[#dadde4]" />
      </label>
      <div className="w-[3px]" />
      <ToolButton width="w-[17px]" label="Conferma" disabled icon={<Icon className="size-[9px]"><path d="M1.500 6.500L4.500 10l6-8" strokeWidth="2" /></Icon>} />
      <ToolButton width="w-[17px]" label="Annulla formula" disabled icon={<Icon className="size-[8px]"><path d="M1.500 1.500l9 9M10.500 1.500l-9 9" strokeWidth="2.400" /></Icon>} />
      <div className="w-[9px]" />
      <ToolButton
        width="w-[66px]"
        caret
        icon={<Icon className="size-[10px]"><path d="M1 3l2-2h7v7L8 10H1z" fill="#4ea345" stroke="#2d6e2a" /><path d="M1.500 3.500h6v6h-6z" fill="#8ccb7a" stroke="none" /><path d="M9.500 7v5M7 9.500h5" stroke="#e07a25" strokeWidth="1.500" /></Icon>}
      >
        Modifica analisi
      </ToolButton>
      <ToolButton width="w-[50px]" caret icon={<TakeoffIcon accent="#2478c8" />}>Aggiorna</ToolButton>
      <div className="w-[10px]" />
      <ToolButton width="w-[24px]" label="Importa/esporta" caret icon={<ExportIcon />} />
    </div>
  );
}

interface Column {
  label: string;
  width: string;
  value?: ReactNode;
  align?: string;
  frozen?: boolean;
}

const TAKEOFF_COLUMNS: Column[] = [
  { label: 'Stato', width: 'w-[31px]' },
  { label: 'WBS/RBS', width: 'w-[47px]', value: '1' },
  { label: 'Nome', width: 'w-[90px]', value: <a href="#door" className="text-[#1257c4] underline">Door</a>, frozen: true },
  { label: 'Descrizione', width: 'w-[89px]' },
  { label: 'Commenti', width: 'w-[36px]' },
  { label: 'Lunghezza', width: 'w-[89px]', value: '0,000 m', align: 'text-right' },
  { label: 'Larghezza', width: 'w-[92px]', value: '0,000 m', align: 'text-right' },
];

const OBJECT_COLUMNS: Column[] = [
  { label: 'Stato', width: 'w-[31px]' },
  { label: 'WBS', width: 'w-[47px]', value: '1.1' },
  { label: 'Oggetto', width: 'w-[90px]', value: '(Nessun nome)', frozen: true },
  {
    label: 'Fermo im...',
    width: 'w-[35px]',
    value: (
      <Icon className="w-[10px] h-[9px] mx-auto"><path d="M1 3h3l1-1.500h3L9 3h2v7.500H1z" fill="#eee" stroke="#555" /><circle cx="6" cy="6.500" r="2.300" fill="#fff" stroke="#555" /></Icon>
    ),
  },
  { label: 'Commenti', width: 'w-[36px]' },
  { label: 'Lunghezzamodello', width: 'w-[90px]' },
  { label: 'Larghezzamodello', width: 'w-[89px]' },
  { label: 'Spessoremodello', width: 'w-[90px]' },
];

interface DataGridProps {
  columns: Column[];
  tableWidth: string;
  row: string;
  height: string;
  thumb: string;
}

function DataGrid({ columns, tableWidth, row, height, thumb }: DataGridProps) {
  return (
    <div className={clsx('flex flex-col border border-[#8a8f98] border-r-0 bg-white overflow-hidden', height)}>
      <div className="flex-1 overflow-hidden">
        <table className={clsx('table-fixed border-collapse', tableWidth)}>
          <colgroup>{columns.map(c => <col key={c.label} className={c.width} />)}</colgroup>
          <thead>
            <tr className="h-[12px] bg-linear-to-b from-[#f6faff] to-[#dfeafa] text-[#1f3552] whitespace-nowrap">
              {columns.map(c => (
                <th key={c.label} className={clsx('p-0 font-normal border-r', c.frozen ? 'border-[#333]' : 'border-[#c3d3e6]')}>{c.label}</th>
              ))}
            </tr>
          </thead>
          <tbody>
            <tr className={clsx('h-[12px] text-white', row)}>
              {columns.map(c => (
                <td key={c.label} className={clsx('p-0 px-[2px] border-r', c.align, c.frozen ? 'border-[#333]' : 'border-[#5aa6f5]')}>{c.value}</td>
              ))}
            </tr>
          </tbody>
        </table>
      </div>
      <HScroll thumb={thumb} />
    </div>
  );
}

function WorkbookTree() {
  return (
    <div className="w-[281px] shrink-0 border border-[#9db5d1] bg-white">
      <table className="w-full table-fixed border-collapse">
        <colgroup><col className="w-[209px]" /><col /></colgroup>
        <thead>
          <tr className="h-[15px] bg-linear-to-b from-[#f5f9fe] to-[#e0ebf8] text-[#1f3552]">
            <th className="p-0 font-semibold border-r border-[#c3d3e6]">Elementi</th>
            <th className="p-0 font-semibold">WBS</th>
          </tr>
        </thead>
        <tbody>
          <tr className="h-[12px] bg-[#3399ff] text-white">
            <td className="p-0 border-r border-[#8cc4ff]">
              <span className="flex items-center gap-[2px] pl-[4px]">
                <i className="w-[7px] h-px bg-[#1c5ea8]" />
                <PageIcon className="size-[9px]" />
                Door(1)
              </span>
            </td>
            <td className="p-0 pl-[2px]">1</td>
          </tr>
        </tbody>
      </table>
    </div>
  );
}

function WorkbookPanel() {
  return (
    <section className="mt-px border-l-2 border-r-2 border-b border-[#8b8b8b] bg-[#f0f0f0]">
      <header className="h-[13px] flex items-center px-[4px] bg-linear-to-b from-[#cbe2f8] to-[#aecff0] border-b border-[#8fa9c4]">
        <h2 className="flex-1 text-[#111]">Cartella di lavoro di Quantification</h2>
        <button type="button" aria-label="Blocca pannello" className="mr-[7px]"><Icon className="size-[6px]"><path d="M1 11l4-4M3 4l5 5 1-3 2-2-3-3-2 2z" stroke="#666" strokeWidth="1.400" /></Icon></button>
        <button type="button" aria-label="Chiudi cartella di lavoro"><Icon className="size-[7px]"><path d="M1 1l10 10M11 1L1 11" stroke="#000" strokeWidth="2.800" /></Icon></button>
      </header>
      <div className="flex">
        <div className="flex-1 min-w-0 overflow-hidden">
          <WorkbookToolbar />
          <MarkupToolbar />
          <div className="flex gap-[4px] pl-[6px] pt-[5px] pb-[5px]">
            <WorkbookTree />
            <div className="flex-1 min-w-0 flex flex-col gap-[4px]">
              <DataGrid columns={TAKEOFF_COLUMNS} tableWidth="w-[474px]" row="bg-[#6199e0]" height="h-[61px]" thumb="w-[181px]" />
              <DataGrid columns={OBJECT_COLUMNS} tableWidth="w-[508px]" row="bg-[#3399ff]" height="h-[87px]" thumb="w-[115px]" />
            </div>
          </div>
        </div>
        <div className="w-[12px] flex flex-col items-center bg-[#f0f0f0]">
          <Caret size="w-[3px] h-[2px]" className="mt-[3px] rotate-180" />
          <span className="mt-[53px] w-[10px] h-[131px] flex flex-col items-center justify-center gap-px border border-[#8e8e8e] bg-linear-to-r from-[#f5f5f5] to-[#c6c6c6]">
            <i className="w-[4px] h-px bg-[#444]" />
            <i className="w-[4px] h-px bg-[#444]" />
          </span>
        </div>
      </div>
      <HScroll thumb="w-[646px]" />
    </section>
  );
}

/* ---------- status bar ---------- */

function Meter({ fill, children }: { fill: string; children: ReactNode }) {
  return (
    <span className="w-[18px] flex flex-col items-start">
      <Icon className="w-[10px] h-[7px]" box="0 0 10 7">{children}</Icon>
      <span className="w-full h-[5px] border border-black bg-white"><span className={clsx('block h-full bg-[#0000ee]', fill)} /></span>
    </span>
  );
}

function StatusBar() {
  return (
    <footer className="h-[17px] flex items-center justify-end pr-[6px] bg-[#a0a0a0] border-b border-[#3f5468] text-[7px] text-black">
      <button type="button" aria-label="Primo foglio" className="mr-[4px] text-[#bcbcbc]"><Icon className="w-[10px] h-[9px]" box="0 0 10 9"><path d="M5 1v7L1 4.500zM7 1h2v7H7z" /></Icon></button>
      <button type="button" aria-label="Foglio precedente" className="mr-[9px] text-[#bcbcbc]"><Icon className="w-[6px] h-[9px]" box="0 0 6 9"><path d="M5 1v7L1 4.500z" /></Icon></button>
      <span className="w-[18px] text-center whitespace-nowrap">1 di 1</span>
      <button type="button" aria-label="Foglio successivo" className="ml-[9px] text-[#bcbcbc]"><Icon className="w-[6px] h-[9px]" box="0 0 6 9"><path d="M1 1v7l4-3.500z" /></Icon></button>
      <button type="button" aria-label="Ultimo foglio" className="ml-[3px] text-[#bcbcbc]"><Icon className="w-[10px] h-[9px]" box="0 0 10 9"><path d="M5 1v7l4-3.500zM1 1h2v7H1z" /></Icon></button>
      <button type="button" aria-label="Browser fogli" className="ml-px"><Icon className="w-[10px] h-[10px]"><path d="M1 1h10v10H1z" fill="#f4f4f4" stroke="#444" /><path d="M1 2.500h10" stroke="#3e5a7a" strokeWidth="2" /><path d="M3 6h1M5 6h5M3 8.500h1M5 8.500h5" stroke="#555" /></Icon></button>
      <span className="w-px h-[11px] ml-[5px] mr-[7px] bg-[#ddd]" />
      <div className="flex gap-[3px]">
        <Meter fill="w-full"><path d="M1 2h6v3H1zM7 2l2 1.500L7 5" fill="#cc3" stroke="#111" /></Meter>
        <Meter fill="w-[15px]"><circle cx="4" cy="3.500" r="3" fill="#999" stroke="#222" /><path d="M1 3.500h6" stroke="#222" /></Meter>
        <Meter fill="w-0"><path d="M1 1h2v2H1zM6 1h2v2H6zM3.500 2.500h2v2h-2zM1 5h2v1H1zM6 5h2v1H6z" stroke="#222" /></Meter>
      </div>
      <span className="ml-[4px] text-[6px] whitespace-nowrap">391 MB</span>
    </footer>
  );
}

export default function App() {
  return (
    <div className="w-full bg-white text-black font-['Open_Sans',sans-serif]">
      <div className="flex bg-[#444]">
        <button type="button" aria-label="Menu applicazione" className="w-[29px] h-[23px] shrink-0 flex items-center justify-center gap-[4px] bg-linear-to-b from-[#9a9a9a] to-[#6a6a6a] border border-[#b5b5b5] rounded-br-sm">
          <svg viewBox="0 0 16 18" className="w-[15px] h-[18px]" aria-hidden="true">
            <path d="M1 3l4-2 6 8V2l4-1v13l-4 3-6-8v7l-4 1z" fill="#0b5a2c" />
            <path d="M1 3l4-2 6 8v8L5 9v7l-4 1z" fill="#0f8a3e" />
            <path d="M1 3l4 1v12l-4 1z" fill="#0a3f20" />
          </svg>
          <Caret size="w-[3px] h-[2px]" />
        </button>
        <div className="flex-1 min-w-0">
          <TitleBar />
          <RibbonTabs />
        </div>
      </div>
      <Ribbon />
      <div className="font-['DejaVu_Sans_Condensed','DejaVu_Sans',sans-serif] text-[6px] leading-[9px]">
        <div className="flex items-stretch bg-[#f0f0f0] border-b-2 border-[#9a9a9a]">
          <CatalogPanel />
          <FloorPlan />
        </div>
        <WorkbookPanel />
      </div>
      <StatusBar />
    </div>
  );
}
